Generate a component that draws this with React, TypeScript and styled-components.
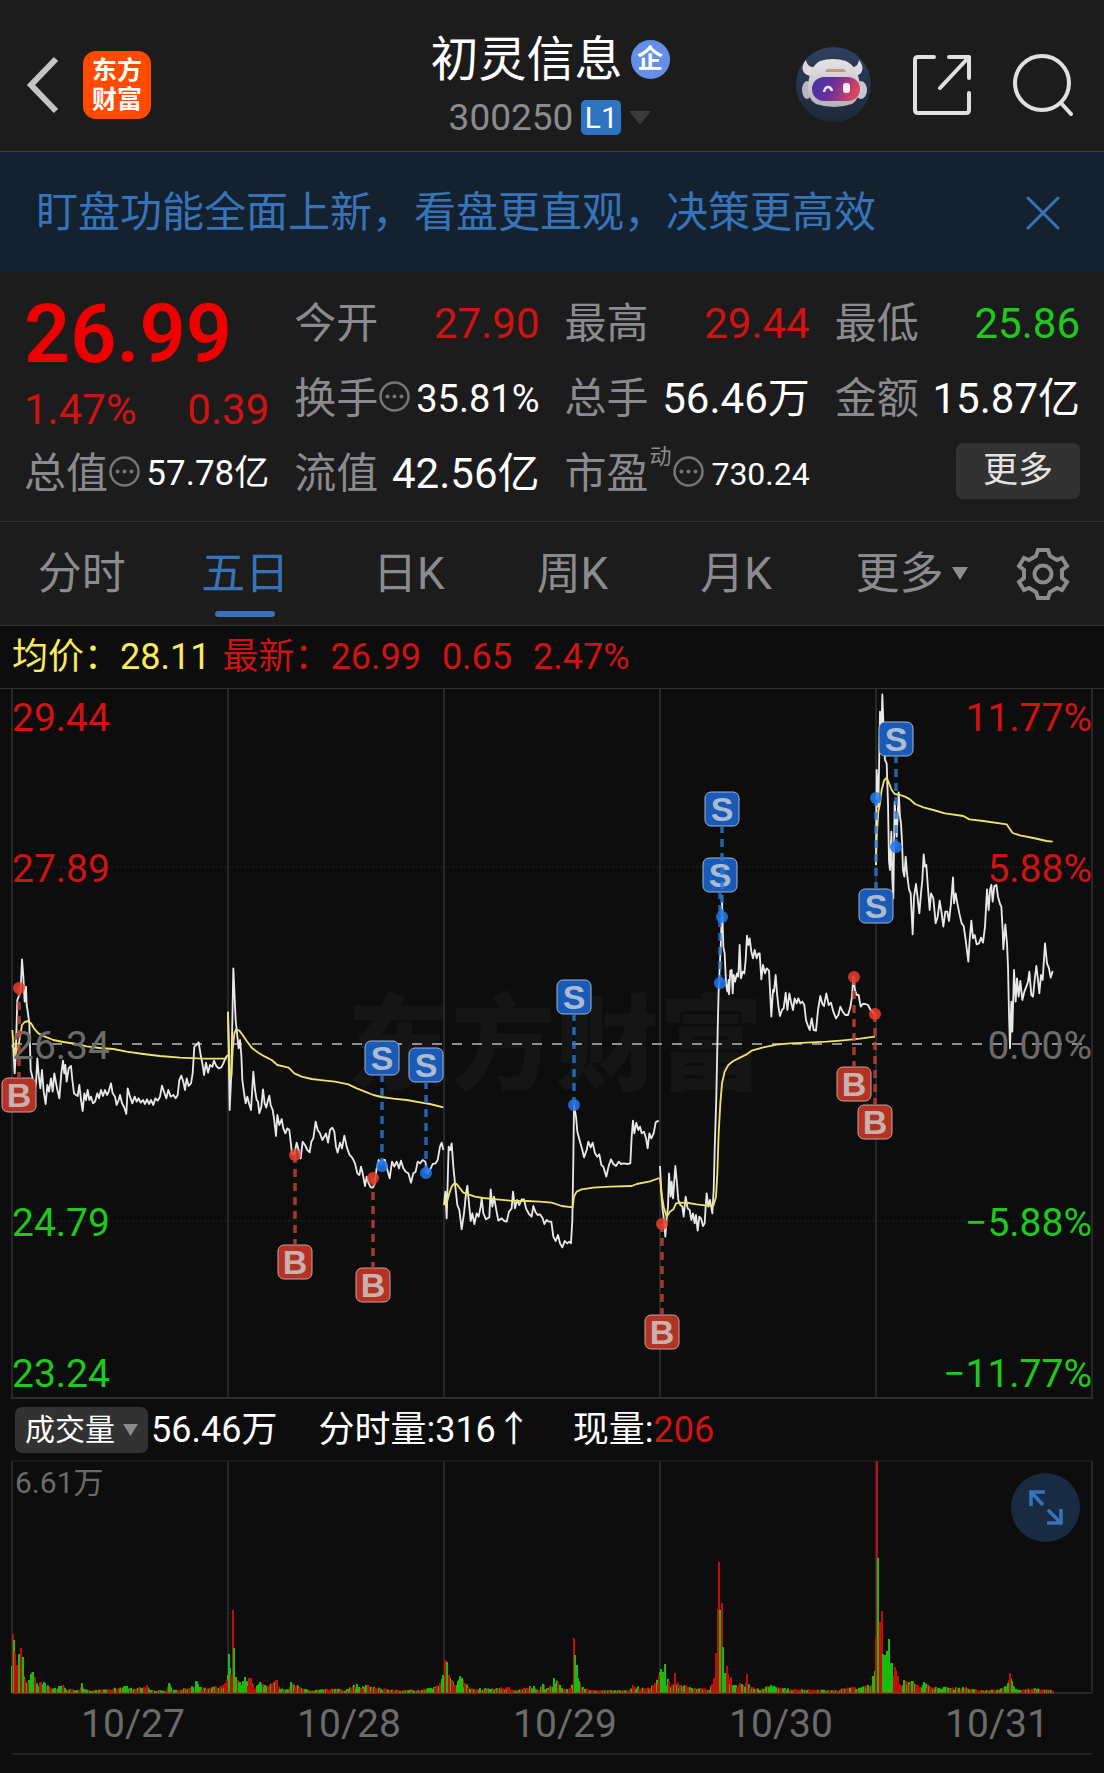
import React from "react";
import styled, { createGlobalStyle } from "styled-components";

const color = {
  panel: "#1c1c1c",
  chart: "#0d0d0d",
  line: "#333333",
  grid: "#272727",
  muted: "#8b8a8f",
  dim: "#6b6b6b",
  blue: "#3673b8",
  red: "#d01212",
  green: "#1fc91c",
  yellow: "#fbe960",
  chip: "#323232",
};

const GlobalStyle = createGlobalStyle`
  *, *::before, *::after { box-sizing: border-box; }
  body {
    margin: 0;
    background: ${color.chart};
    color: #fff;
    font-family: Roboto, "Noto Sans CJK SC", sans-serif;
  }
  button {
    margin: 0;
    padding: 0;
    border: 0;
    background: none;
    color: inherit;
    font: inherit;
    cursor: pointer;
  }
  svg { display: block; flex: none; }
`;

/* ---------- header ---------- */

const Header = styled.header`
  display: grid;
  grid-template-columns: 1fr auto 1fr;
  align-items: center;
  height: 152px;
  padding: 18px 30px 0 26px;
  background: ${color.panel};
  border-bottom: 1px solid #3a3a3a;
`;

const HeaderStart = styled.div`
  display: flex;
  align-items: center;
  gap: 24px;
`;

const HeaderEnd = styled.div`
  display: flex;
  align-items: center;
  justify-content: flex-end;
  gap: 42px;
`;

const Logo = styled.div`
  display: flex;
  flex-direction: column;
  align-items: center;
  justify-content: center;
  width: 68px;
  height: 68px;
  border-radius: 13px;
  background: #ff4a00;
  font-size: 25px;
  line-height: 29px;
  font-weight: 700;
`;

const TitleBlock = styled.div`
  display: flex;
  flex-direction: column;
  align-items: center;
  gap: 10px;
`;

const TitleRow = styled.div`
  display: flex;
  align-items: center;
  gap: 8px;
`;

const Title = styled.h1`
  margin: 0;
  font-size: 48px;
  line-height: 56px;
  font-weight: 400;
`;

const CompanyBadge = styled.span`
  width: 39px;
  height: 39px;
  border-radius: 50%;
  background: #658ee8;
  font-size: 26px;
  line-height: 39px;
  font-weight: 700;
  text-align: center;
`;

const CodeRow = styled.div`
  display: flex;
  align-items: center;
  gap: 8px;
  color: ${color.muted};
  font-size: 37px;
  line-height: 40px;
`;

const LevelBadge = styled.span`
  width: 40px;
  height: 35px;
  border-radius: 5px;
  background: #2f74c0;
  color: #fff;
  font-size: 30px;
  line-height: 35px;
  text-align: center;
`;

/* ---------- notice ---------- */

const Notice = styled.aside`
  display: flex;
  align-items: center;
  justify-content: space-between;
  height: 120px;
  padding: 2px 44px 0 36px;
  background: #14212f;
  color: ${color.blue};
  font-size: 42px;
  line-height: 60px;
`;

/* ---------- quote ---------- */

const Quote = styled.section`
  display: grid;
  grid-template-columns: repeat(4, 1fr);
  grid-auto-rows: 75px;
  column-gap: 25px;
  padding: 14px 24px 10px;
  background: ${color.panel};
  border-bottom: 1px solid ${color.line};
`;

const PriceBlock = styled.div`
  grid-row: span 2;
  color: ${color.red};
`;

const Price = styled.div`
  color: #ee0000;
  font-size: 81px;
  line-height: 98px;
  font-weight: 600;
`;

const Change = styled.div`
  display: flex;
  justify-content: space-between;
  font-size: 42px;
  line-height: 52px;
`;

const Stat = styled.div`
  display: flex;
  align-items: center;
  justify-content: space-between;
  white-space: nowrap;
`;

const StatLabel = styled.span`
  display: flex;
  align-items: center;
  gap: 1px;
  color: ${color.muted};
  font-size: 42px;
  line-height: 50px;
`;

const LabelMark = styled.sup`
  align-self: flex-start;
  font-size: 22px;
  line-height: 16px;
`;

const InfoSvg = styled.svg`
  margin-bottom: 4px;
`;

const StatValue = styled.span<{ $size?: number; $color?: string }>`
  color: ${(p) => p.$color ?? "#fff"};
  font-size: ${(p) => p.$size ?? 42}px;
  line-height: 50px;
`;

const MoreButton = styled.button`
  justify-self: end;
  align-self: center;
  width: 124px;
  height: 56px;
  margin-bottom: 6px;
  border-radius: 7px;
  background: ${color.chip};
  color: #e4e4e4;
  font-size: 35px;
  line-height: 56px;
`;

/* ---------- tabs ---------- */

const Tabs = styled.nav`
  display: grid;
  grid-template-columns: repeat(6, 4fr) 3fr;
  height: 104px;
  background: ${color.panel};
  border-bottom: 1px solid ${color.line};
`;

const Tab = styled.button<{ $active?: boolean }>`
  position: relative;
  display: flex;
  align-items: center;
  justify-content: center;
  color: ${(p) => (p.$active ? color.blue : color.muted)};
  font-size: 44px;
  line-height: 60px;

  &::after {
    content: "";
    display: ${(p) => (p.$active ? "block" : "none")};
    position: absolute;
    left: 50%;
    bottom: 8px;
    width: 60px;
    height: 6px;
    margin-left: -30px;
    border-radius: 3px;
    background: ${color.blue};
  }
`;

const TabText = styled.span`
  position: relative;
`;

const TabArrow = styled.span`
  position: absolute;
  left: 100%;
  top: 50%;
  margin: -7px 0 0 8px;
`;

/* ---------- chart ---------- */

const Legend = styled.div`
  display: flex;
  align-items: center;
  gap: 21px;
  height: 63px;
  padding-left: 12px;
  border-bottom: 1px solid #343434;
  color: ${color.red};
  font-size: 36px;
  line-height: 48px;
  white-space: nowrap;
`;

const LegendAverage = styled.span`
  margin-right: -9px;
  color: ${color.yellow};
`;

const ChartSvg = styled.svg`
  width: 100%;
  height: auto;
  font-family: Roboto, "Noto Sans CJK SC", sans-serif;
`;

const VolumeBar = styled.div`
  display: flex;
  align-items: center;
  height: 60px;
  padding-left: 15px;
  font-size: 36px;
  line-height: 46px;
  white-space: nowrap;
`;

const VolumePicker = styled.button`
  display: flex;
  align-items: center;
  gap: 8px;
  height: 46px;
  margin-right: 3px;
  padding: 0 10px;
  border-radius: 7px;
  background: ${color.chip};
  font-size: 30px;
  line-height: 46px;
`;

const VolumeItem = styled.span`
  margin-right: 41px;
`;

const Rise = styled.span`
  color: ${color.red};
`;

const VolumeChart = styled.div`
  position: relative;
`;

const ExpandButton = styled.button`
  position: absolute;
  top: 13px;
  right: 24px;
  display: grid;
  place-items: center;
  width: 69px;
  height: 69px;
  border-radius: 50%;
  background: #182b42;
`;

const Dates = styled.div`
  display: grid;
  grid-template-columns: repeat(5, 1fr);
  margin: 0 12px 18px;
  border-bottom: 2px solid #232323;
  color: ${color.dim};
  font-size: 39px;
  line-height: 57px;
`;

const DateLabel = styled.span`
  padding-left: 26px;
  text-align: center;
`;

/* ---------- icons ---------- */

const BackIcon = () => (
  <svg width="33" height="58" viewBox="0 0 33 58" fill="none" stroke="#c4c4c4" strokeWidth="6">
    <path d="M30 3 5 29 30 55" />
  </svg>
);

const Triangle = ({ w, h, fill }: { w: number; h: number; fill: string }) => (
  <svg width={w} height={h} viewBox="0 0 10 10" preserveAspectRatio="none" fill={fill}>
    <path d="M0 0H10L5 10Z" />
  </svg>
);

const RobotIcon = () => (
  <svg width="75" height="75" viewBox="0 0 75 75">
    <defs>
      <linearGradient id="sky" x1="0" y1="0" x2="0" y2="1">
        <stop offset="0" stopColor="#2f3f60" />
        <stop offset="1" stopColor="#1f2838" />
      </linearGradient>
      <linearGradient id="visor" x1="0" y1="0" x2="1" y2="0.25">
        <stop offset="0" stopColor="#3c35a4" />
        <stop offset="0.5" stopColor="#6a2f9c" />
        <stop offset="1" stopColor="#d8455f" />
      </linearGradient>
      <linearGradient id="shell" x1="0" y1="0" x2="0" y2="1">
        <stop offset="0" stopColor="#e6e4e6" />
        <stop offset="1" stopColor="#b5b2ba" />
      </linearGradient>
    </defs>
    <circle cx="37.500" cy="37.500" r="37.500" fill="url(#sky)" />
    <path d="M10 13C4 20 6 27 14 29L21 20C14 21 11 18 10 13ZM63 13C69 20 67 27 60 29L53 20C60 21 62 18 63 13Z" fill="#dddbe0" />
    <ellipse cx="11" cy="43" rx="5" ry="9" fill="#b9b6c0" />
    <ellipse cx="65" cy="43" rx="6" ry="9" fill="#c9c6cf" />
    <path d="M24 14Q37 10 50 14Q62 20 64 38Q64 52 56 57Q38 63 20 57Q11 52 12 38Q14 19 24 14Z" fill="url(#shell)" />
    <path d="M31 22H48L50 25H29Z" fill="#c9987a" />
    <rect x="16" y="30" width="48" height="24" rx="12" fill="url(#visor)" />
    <path d="M28 45Q29 40 32 40Q35 40 36 44" fill="none" stroke="#efeaff" strokeWidth="2.500" />
    <rect x="47" y="36" width="7" height="10" rx="3" fill="#f6eef4" />
  </svg>
);

const ShareIcon = () => (
  <svg width="58" height="60" viewBox="0 0 58 60" fill="none" stroke="#e0e0e0" strokeWidth="4" strokeLinecap="round" strokeLinejoin="round">
    <path d="M21 2H5Q2 2 2 5V55Q2 58 5 58H53Q56 58 56 55V38" />
    <path d="M36 2H56V23M56 2 27 33" />
  </svg>
);

const SearchIcon = () => (
  <svg width="61" height="62" viewBox="0 0 61 62" fill="none" stroke="#e0e0e0" strokeWidth="4" strokeLinecap="round">
    <circle cx="29" cy="29" r="27" />
    <path d="M48 49 58 60" />
  </svg>
);

const CloseIcon = () => (
  <svg width="34" height="34" viewBox="0 0 34 34" fill="none" stroke={color.blue} strokeWidth="3" strokeLinecap="round">
    <path d="M2 2 32 32M32 2 2 32" />
  </svg>
);

const InfoIcon = () => (
  <InfoSvg width="31" height="31" viewBox="0 0 31 31" fill="#76757a">
    <circle cx="15.500" cy="15.500" r="14" fill="none" stroke="#76757a" strokeWidth="2.500" />
    <circle cx="8.500" cy="15.500" r="2" />
    <circle cx="15.500" cy="15.500" r="2" />
    <circle cx="22.500" cy="15.500" r="2" />
  </InfoSvg>
);

const GearIcon = () => (
  <svg width="54" height="54" viewBox="-27 -27 54 54" fill="none" stroke={color.muted} strokeWidth="4">
    <path d="M-5 -24H5L7 -18L14 -14L19 -16L24 -8L19 -4V4L24 8L19 16L14 14L7 18L5 24H-5L-7 18L-14 14L-19 16L-24 8L-19 4V-4L-24 -8L-19 -16L-14 -14L-7 -18Z" />
    <circle r="8.500" />
  </svg>
);

const ExpandIcon = () => (
  <svg width="35" height="35" viewBox="0 0 35 35" fill="none" stroke={color.blue} strokeWidth="3.500">
    <path d="M17 2H3V16M3 2 15 15M33 19V33H19M33 33 20 20" />
  </svg>
);

/* ---------- price data ---------- */

/* Traced at three units per chart pixel; x and y are the segment's origin. */
interface Segment {
  x: number;
  y: number;
  price: string;
  average: string;
}

const segments: Segment[] = [
  {
    x: 0,
    y: 940,
    price:
      "37,315 40,325 44,400 47,350 52,180 58,165 62,150 66,58 70,110 74,185 78,140 80,195 84,220 88,250 92,390 97,410 103,455 108,430 112,355 116,405 121,445 126,390 131,455 137,492 142,435 147,455 153,415 158,455 163,400 170,440 178,475 184,400 189,362 193,400 196,375 200,425 206,385 213,378 217,420 222,460 228,465 233,468 238,435 243,480 248,513 253,460 258,480 263,450 268,480 273,470 279,490 285,485 292,460 297,475 303,450 309,468 315,450 321,465 326,455 333,430 338,460 345,470 350,495 356,480 360,465 366,490 372,500 379,522 383,445 390,470 397,490 404,470 410,485 416,475 422,488 429,480 435,492 441,478 447,492 453,480 460,495 466,475 473,482 480,470 486,437 492,455 499,475 505,450 512,470 520,465 527,475 533,465 538,420 544,407 550,425 555,450 560,415 566,438 573,430 578,400 583,320 589,315 596,307 602,345 608,375 612,405 618,368 624,398 630,375 637,380 642,362 649,378 656,385 664,382 670,370 676,355 683,345",
    average:
      "37,270 41,320 46,340 55,320 60,290 66,255 74,246 85,243 93,250 102,265 115,280 135,290 160,300 190,306 230,312 260,319 300,324 340,327 380,335 430,342 480,348 540,353 610,356 680,356",
  },
  {
    x: 0,
    y: 940,
    price:
      "684,215 689,510 694,400 700,85 707,240 712,290 716,325 720,300 724,345 727,420 733,465 737,490 742,470 747,490 753,510 760,395 765,450 770,480 774,485 778,520 784,500 789,448 794,490 799,503 804,480 808,467 812,495 818,510 822,535 828,588 832,525 838,555 845,537 850,565 856,580 862,565 868,570 872,605 876,640 883,645 890,608 896,630 902,655 908,605 915,615 922,630 929,637 934,605 940,595 947,545 953,570 960,580 967,600 974,588 978,580 984,608 990,570 997,563 1003,575 1008,620 1013,638 1020,608 1026,625 1033,587 1040,620 1048,643 1058,655 1065,670 1072,700 1078,705 1083,680 1088,700 1095,738 1100,710 1106,730 1112,742 1118,743 1123,735 1130,685 1136,660 1142,670 1148,660 1155,660 1162,690 1169,715 1176,665 1183,680 1190,665 1197,685 1203,662 1210,685 1217,695 1225,700 1233,728 1240,700 1247,695 1253,665 1260,670 1268,660 1276,665 1282,700 1290,690 1298,672 1307,670 1313,660 1320,620 1325,608 1330,630",
    average:
      "684,215 689,400 694,410 698,330 703,280 708,268 718,272 728,285 740,303 757,325 775,338 795,350 815,360 832,375 850,379 866,383 883,400 905,410 935,417 970,421 1005,425 1045,433 1070,445 1095,455 1120,465 1145,471 1180,476 1220,480 1260,487 1290,492 1330,502",
  },
  {
    x: 350,
    y: 960,
    price:
      "282,735 286,695 290,775 296,560 301,570 305,550 310,620 316,680 322,735 328,750 335,808 342,760 348,700 352,677 357,730 362,783 367,760 373,792 380,760 386,770 392,740 395,715 400,760 408,778 418,772 422,688 427,740 432,710 438,745 445,782 455,775 463,783 470,785 477,755 485,745 489,695 495,745 501,720 508,735 515,718 522,718 528,745 537,762 545,770 550,738 556,755 563,765 570,763 578,775 583,792 590,780 597,785 604,785 610,830 617,843 624,825 630,850 637,862 644,843 652,850 658,845 663,850 667,780 670,600 672,437 678,470 682,515 690,545 697,570 702,592 710,570 715,545 722,562 728,548 735,580 742,590 748,583 754,615 760,620 769,650 776,618 783,598 790,612 798,618 806,605 813,612 822,610 832,612 841,610 845,530 849,482 853,520 859,488 865,510 870,500 875,520 882,515 888,535 893,565 898,520 904,535 911,520 917,487 926,482",
    average:
      "282,733 290,730 298,700 305,680 312,671 320,672 330,685 340,698 355,703 375,710 400,714 440,718 480,722 530,723 570,725 605,728 635,738 668,742 672,710 680,695 695,688 730,683 780,680 845,678 860,672 900,664 928,654",
  },
  {
    x: 640,
    y: 760,
    price:
      "60,1218 64,1300 68,1350 72,1380 76,1430 80,1375 84,1340 87,1240 92,1310 95,1265 99,1315 102,1275 106,1218 110,1260 115,1320 121,1335 127,1340 131,1370 137,1310 143,1345 149,1350 154,1380 159,1360 164,1390 168,1365 173,1412 178,1370 183,1375 189,1398 194,1390 197,1340 200,1300 205,1340 210,1320 217,1360 221,1290 224,1170 229,1010 233,810 236,690 239,625 243,540 246,425 250,560 254,580 258,670 262,695 266,660 267,703 271,632 275,630 278,700 281,645 285,665 291,640 295,650 299,555 303,655 308,635 313,640 317,600 321,527 325,555 329,535 334,575 339,595 344,570 350,595 355,580 359,580 364,658 369,615 375,640 380,625 387,632 390,690 394,770 399,690 402,695 407,645 411,700 416,745 420,768 426,750 431,745 437,698 442,750 448,700 453,725 459,750 464,715 470,730 475,715 481,730 487,725 493,735 498,780 503,795 509,810 515,775 521,810 528,812 534,750 541,708 547,732 552,738 559,700 566,735 573,728 580,755 588,775 595,765 601,740 608,755 616,765 624,765 631,742 636,710 640,650 645,690 650,705 656,705 662,740 668,732 676,732 684,735 692,750 698,755 705,765",
    average:
      "60,1253 66,1310 72,1345 80,1370 90,1355 100,1348 108,1330 120,1328 145,1329 170,1333 200,1337 220,1337 228,1310 232,1240 236,1120 241,1030 246,970 254,935 265,915 280,903 300,893 320,883 335,872 370,862 410,854 450,850 500,848 560,845 610,841 660,836 705,830",
  },
  {
    x: 850,
    y: 680,
    price:
      "78,555 80,270 85,380 90,95 93,200 97,43 101,150 105,240 110,250 114,370 117,545 120,570 124,455 127,600 130,655 134,365 140,470 146,337 150,410 153,430 156,485 159,570 163,590 167,530 171,580 177,628 182,640 188,763 192,650 198,612 203,655 208,700 213,640 217,600 221,523 225,560 229,555 234,625 239,690 243,640 250,655 257,730 263,710 269,662 275,700 280,740 286,695 292,695 297,723 303,670 309,592 312,670 317,640 322,670 328,700 335,730 341,738 347,780 355,845 359,780 364,722 369,775 374,765 380,793 387,790 393,773 399,788 405,740 411,628 416,690 420,630 424,615 428,665 433,618 439,615 444,650 450,672 454,680 458,750 460,808 466,733 471,790 474,860 477,1000 480,1105 484,965 487,1055 492,870 497,965 501,895 506,950 511,903 517,960 523,935 529,920 534,905 538,875 544,945 549,950 554,900 559,858 564,900 568,940 573,885 578,900 585,790 591,850 597,865 602,893 608,873",
    average:
      "78,555 80,470 85,395 90,370 95,330 102,302 110,293 117,310 125,330 134,342 150,345 165,350 180,358 195,372 220,382 250,390 285,400 340,408 358,418 400,423 470,433 478,445 488,459 510,466 550,474 590,483 608,485",
  },
];

interface Trade {
  side: "B" | "S";
  x: number;
  dot: number;
  tag: number;
}

const trades: Trade[] = [
  { side: "B", x: 19, dot: 988, tag: 1095 },
  { side: "B", x: 295, dot: 1155, tag: 1262 },
  { side: "B", x: 373, dot: 1178, tag: 1285 },
  { side: "S", x: 382, dot: 1166, tag: 1058 },
  { side: "S", x: 426, dot: 1173, tag: 1065 },
  { side: "S", x: 574, dot: 1105, tag: 997 },
  { side: "B", x: 662, dot: 1224, tag: 1332 },
  { side: "S", x: 720, dot: 983, tag: 875 },
  { side: "S", x: 722, dot: 917, tag: 809 },
  { side: "B", x: 854, dot: 977, tag: 1084 },
  { side: "B", x: 875, dot: 1014, tag: 1122 },
  { side: "S", x: 876, dot: 798, tag: 906 },
  { side: "S", x: 896, dot: 847, tag: 739 },
];

const axis = [
  { y: 717, price: "29.44", pct: "11.77%", fill: color.red },
  { y: 868, price: "27.89", pct: "5.88%", fill: color.red },
  { y: 1045, price: "26.34", pct: "0.00%", fill: color.dim },
  { y: 1222, price: "24.79", pct: "−5.88%", fill: color.green },
  { y: 1373, price: "23.24", pct: "−11.77%", fill: color.green },
];

const dayEdges = [12, 228, 444, 660, 876, 1092];

const TradeMark = ({ side, x, dot, tag }: Trade) => {
  const buy = side === "B";
  const edge = tag > dot ? tag - 18 : tag + 18;
  return (
    <g>
      <path
        d={`M${x} ${dot}V${edge}`}
        stroke={buy ? "#c64436" : "#2a78dd"}
        strokeWidth="3.500"
        strokeDasharray="8 6"
        opacity="0.8"
      />
      <circle cx={x} cy={dot} r="6" fill={buy ? "#e8402e" : "#2478ea"} opacity="0.85" />
      <rect
        x={x - 17}
        y={tag - 17}
        width="34"
        height="34"
        rx="6"
        fill={buy ? "#b43224" : "#195ab8"}
        stroke={buy ? "#c9a5a1" : "#a3b4cf"}
      />
      <text
        x={x}
        y={tag + 12}
        fontFamily="Liberation Sans, sans-serif"
        fontSize="34"
        fontWeight="700"
        textAnchor="middle"
        fill={buy ? "#c9b1af" : "#adbbd1"}
      >
        {side}
      </text>
    </g>
  );
};

const PriceChart = () => (
  <ChartSvg viewBox="0 689 1104 711" role="img" aria-label="五日走势">
    <text x="555" y="1082" fontSize="104" fontWeight="900" textAnchor="middle" fill="#151515">
      东方财富
    </text>
    <g stroke={color.grid} strokeWidth="2" fill="none">
      {dayEdges.map((x) => (
        <path key={x} d={`M${x} 689V1398`} />
      ))}
      <path d="M11 1398H1093" stroke="#2e2e2e" />
      <path d="M12 867H1092M12 1221H1092" strokeWidth="1" strokeDasharray="2 2" />
    </g>
    <path d="M12 1044H1092" stroke="#8f8f8f" strokeWidth="2" strokeDasharray="10 10" />
    <g fill="none" strokeWidth="5.500" strokeLinejoin="round">
      {segments.map((s, i) => (
        <g key={i} transform={`translate(${s.x} ${s.y}) scale(${1 / 3})`}>
          <polyline points={s.price} stroke="#e8e8e8" />
          <polyline points={s.average} stroke="#f0e268" />
        </g>
      ))}
    </g>
    <g fontSize="39">
      {axis.map((a) => (
        <g key={a.y} fill={a.fill}>
          <text x="12" y={a.y + 14}>
            {a.price}
          </text>
          <text x="1092" y={a.y + 14} textAnchor="end">
            {a.pct}
          </text>
        </g>
      ))}
    </g>
    {trades.map((t) => (
      <TradeMark key={`${t.x}-${t.tag}`} {...t} />
    ))}
  </ChartSvg>
);

/* ---------- volume data ---------- */

type Peak = [x: number, height: number, rising?: 0 | 1];

const peaks: Peak[] = [
  [12, 27, 0], [13, 59, 1], [14, 53, 0], [15, 41, 1], [17, 28, 1], [19, 39, 0], [21, 45, 1], [23, 36, 0],
  [25, 14], [28, 10], [31, 19, 0], [33, 21, 0], [35, 16, 1], [38, 7], [41, 11, 1], [45, 10, 0], [50, 6],
  [55, 5], [63, 8, 1], [66, 3], [80, 3], [82, 10, 0], [84, 4], [90, 2], [110, 3], [125, 7, 0], [135, 3],
  [147, 8, 1], [150, 2], [166, 2], [169, 10, 0], [172, 2], [190, 5], [196, 12, 0], [200, 6], [210, 5],
  [220, 6, 1], [225, 10, 1], [227, 13, 1], [229, 39, 0], [230, 25, 0], [231, 19, 1], [233, 83, 1],
  [234, 45, 0], [236, 16, 0], [240, 11, 0], [245, 16, 0], [251, 15, 1], [255, 4], [260, 11, 0], [266, 7, 0],
  [277, 13, 1], [280, 4], [288, 3], [291, 11, 0], [300, 6], [310, 2], [335, 4], [345, 2], [357, 9, 0],
  [362, 5], [366, 8, 0], [375, 5, 1], [400, 2], [420, 3], [435, 5, 1], [440, 10, 1], [443, 18, 0],
  [445, 33, 1], [447, 31, 0], [449, 18, 1], [452, 13, 1], [455, 8], [460, 17, 0], [462, 15, 0], [465, 10, 1],
  [470, 4], [490, 4], [509, 6, 1], [515, 2], [534, 7, 0], [538, 2], [543, 9, 0], [548, 3], [554, 15, 0],
  [560, 8, 0], [565, 3], [571, 5], [574, 55, 1], [575, 38, 0], [577, 28, 0], [579, 12, 0], [585, 4],
  [595, 2], [630, 2], [633, 8, 1], [645, 4], [655, 10, 1], [659, 18, 1], [661, 24, 0], [663, 21, 0],
  [665, 29, 0], [669, 12, 1], [672, 8], [675, 20, 1], [680, 8], [695, 5], [710, 3], [714, 15, 1],
  [716, 40, 1], [718, 84, 1], [719, 131, 1], [720, 83, 0], [722, 90, 1], [723, 46, 0], [725, 20, 0],
  [727, 27, 1], [731, 16, 1], [735, 8], [740, 10], [745, 6], [747, 19, 1], [750, 6], [760, 3], [771, 8, 0],
  [790, 3], [810, 3], [830, 2], [850, 5], [860, 5], [868, 8, 0], [873, 17, 0], [876, 56, 1], [877, 232, 1],
  [878, 135, 0], [880, 71, 1], [882, 82, 1], [883, 39, 0], [885, 38, 0], [887, 42, 0], [889, 54, 0],
  [892, 30, 0], [895, 26, 1], [898, 17, 1], [900, 9], [904, 13, 0], [912, 12, 0], [920, 6], [924, 11, 0],
  [930, 6], [945, 6], [965, 5], [980, 2], [1000, 3], [1008, 10, 0], [1010, 20, 1], [1012, 12, 0], [1016, 4],
  [1020, 3], [1033, 4], [1053, 2],
];

const noise = (i: number) => {
  const v = Math.sin(i * 12.9898 + 4.137) * 43758.5453;
  return v - Math.floor(v);
};

const volumeFill = (rising: boolean) => (rising ? "#d80c0c" : "#19d010");

const volumeBars: { x: number; h: number; rising: boolean }[] = [];
for (let p = 0; p < peaks.length - 1; p += 1) {
  const [x0, h0] = peaks[p];
  const [x1, h1] = peaks[p + 1];
  for (let x = x0 + 1; x < x1; x += 1) {
    const base = Math.min(h0 + ((h1 - h0) * (x - x0)) / (x1 - x0), Math.min(h0, h1) + 6);
    volumeBars.push({ x, h: 1 + base * (0.35 + 0.65 * noise(x)), rising: noise(x + 5000) > 0.5 });
  }
}
peaks.forEach(([x, h, rising], i) => {
  volumeBars.push({ x, h, rising: rising === undefined ? noise(i) > 0.5 : rising === 1 });
});

const VolumePlot = () => (
  <ChartSvg viewBox="0 1460 1104 236" role="img" aria-label="成交量">
    <g stroke={color.grid} strokeWidth="2" fill="none">
      {dayEdges.map((x) => (
        <path key={x} d={`M${x} 1461V1693`} />
      ))}
      <path d="M12 1461H1092" strokeWidth="1" />
      <path d="M12 1693H1092" />
    </g>
    <g opacity="0.9">
      {volumeBars.map((b, i) => (
        <rect key={i} x={b.x - 1} y={1693 - b.h} width="2" height={b.h} fill={volumeFill(b.rising)} />
      ))}
    </g>
    <path d="M12 1693H1053" stroke="#9c3a08" strokeWidth="1" />
    <text x="15" y="1493" fontSize="30" fill={color.dim}>
      6.61万
    </text>
  </ChartSvg>
);

/* ---------- page ---------- */

interface StatData {
  label: string;
  value: string;
  tint?: string;
  info?: boolean;
  size?: number;
  mark?: string;
}

const stats: StatData[] = [
  { label: "今开", value: "27.90", tint: color.red },
  { label: "最高", value: "29.44", tint: color.red },
  { label: "最低", value: "25.86", tint: color.green },
  { label: "换手", value: "35.81%", info: true, size: 38 },
  { label: "总手", value: "56.46万" },
  { label: "金额", value: "15.87亿" },
  { label: "总值", value: "57.78亿", info: true, size: 35 },
  { label: "流值", value: "42.56亿" },
  { label: "市盈", mark: "动", value: "730.24", info: true, size: 32 },
];

const tabs = ["分时", "五日", "日K", "周K", "月K"];
const dates = ["10/27", "10/28", "10/29", "10/30", "10/31"];

export default function App() {
  return (
    <>
      <GlobalStyle />
      <Header>
        <HeaderStart>
          <button aria-label="返回">
            <BackIcon />
          </button>
          <Logo>
            <span>东方</span>
            <span>财富</span>
          </Logo>
        </HeaderStart>
        <TitleBlock>
          <TitleRow>
            <Title>初灵信息</Title>
            <CompanyBadge>企</CompanyBadge>
          </TitleRow>
          <CodeRow>
            <span>300250</span>
            <LevelBadge>L1</LevelBadge>
            <Triangle w={22} h={14} fill="#3b3b3b" />
          </CodeRow>
        </TitleBlock>
        <HeaderEnd>
          <button aria-label="智能助手">
            <RobotIcon />
          </button>
          <button aria-label="分享">
            <ShareIcon />
          </button>
          <button aria-label="搜索">
            <SearchIcon />
          </button>
        </HeaderEnd>
      </Header>

      <Notice>
        <span>盯盘功能全面上新，看盘更直观，决策更高效</span>
        <button aria-label="关闭">
          <CloseIcon />
        </button>
      </Notice>

      <Quote>
        <PriceBlock>
          <Price>26.99</Price>
          <Change>
            <span>1.47%</span>
            <span>0.39</span>
          </Change>
        </PriceBlock>
        {stats.map((s) => (
          <Stat key={s.label}>
            <StatLabel>
              {s.label}
              {s.mark && <LabelMark>{s.mark}</LabelMark>}
              {s.info && <InfoIcon />}
            </StatLabel>
            <StatValue $size={s.size} $color={s.tint}>
              {s.value}
            </StatValue>
          </Stat>
        ))}
        <MoreButton>更多</MoreButton>
      </Quote>

      <Tabs>
        {tabs.map((t) => (
          <Tab key={t} $active={t === "五日"}>
            {t}
          </Tab>
        ))}
        <Tab>
          <TabText>
            更多
            <TabArrow>
              <Triangle w={16} h={13} fill={color.muted} />
            </TabArrow>
          </TabText>
        </Tab>
        <Tab aria-label="设置">
          <GearIcon />
        </Tab>
      </Tabs>

      <main>
        <Legend>
          <LegendAverage>均价：28.11</LegendAverage>
          <span>最新：26.99</span>
          <span>0.65</span>
          <span>2.47%</span>
        </Legend>
        <PriceChart />
        <VolumeBar>
          <VolumePicker>
            成交量
            <Triangle w={15} h={12} fill={color.muted} />
          </VolumePicker>
          <VolumeItem>56.46万</VolumeItem>
          <VolumeItem>分时量:316↑</VolumeItem>
          <span>
            现量:<Rise>206</Rise>
          </span>
        </VolumeBar>
        <VolumeChart>
          <VolumePlot />
          <ExpandButton aria-label="全屏">
            <ExpandIcon />
          </ExpandButton>
        </VolumeChart>
        <Dates>
          {dates.map((d) => (
            <DateLabel key={d}>{d}</DateLabel>
          ))}
        </Dates>
      </main>
    </>
  );
}
